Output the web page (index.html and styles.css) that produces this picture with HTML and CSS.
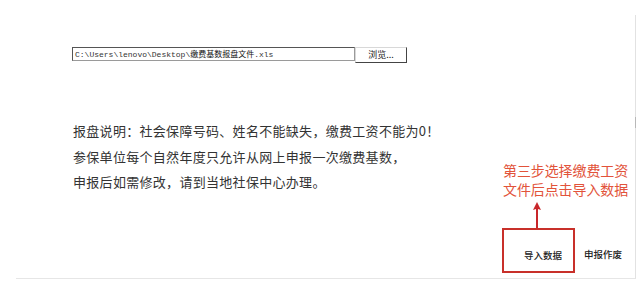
FILE: index.html
```html
<!DOCTYPE html>
<html lang="zh-CN">
<head>
    <meta charset="UTF-8">
    <meta name="viewport" content="width=device-width, initial-scale=1.0">
    <title>缴费基数报盘</title>
    <link rel="stylesheet" href="styles.css">
</head>
<body>
    <div class="panel">
        <div class="file-row">
            <div class="file-path">C:\Users\lenovo\Desktop\<span class="cjk">缴费基数报盘文件</span>.xls</div>
            <div class="browse">浏览...</div>
        </div>

        <div class="notice">
            <p>报盘说明：社会保障号码、姓名不能缺失，缴费工资不能为0！</p>
            <p>参保单位每个自然年度只允许从网上申报一次缴费基数，</p>
            <p>申报后如需修改，请到当地社保中心办理。</p>
        </div>

        <div class="callout">
            <div class="callout-text">第三步选择缴费工资<br>文件后点击导入数据</div>
            <svg class="arrow" width="10" height="26" viewBox="0 0 10 26">
                <path d="M5 0 L9 8 L6 7 L6 26 L4 26 L4 7 L1 8 Z" fill="#c8262a"/>
            </svg>
        </div>

        <div class="actions">
            <div class="btn btn-import">导入数据</div>
            <div class="btn">申报作废</div>
        </div>
    </div>
</body>
</html>
```

FILE: styles.css
```css
body {
    margin: 0;
    background: #fff;
    font-family: "Noto Sans CJK SC", "Noto Sans", sans-serif;
}
.panel {
    position: relative;
    margin: 15px 4px 0 16px;
    height: 263px;
    border-right: 1px solid #e2e2e2;
    border-bottom: 1px solid #e6e6e6;
    display: flex;
    flex-direction: column;
}
.panel::after {
    content: "";
    position: absolute;
    right: -1px;
    top: 102px;
    width: 1px;
    height: 11px;
    background: #b8b8b8;
}
.file-row {
    display: flex;
    align-items: flex-start;
    padding: 32px 0 0 56px;
}
.file-path {
    box-sizing: border-box;
    width: 283px;
    height: 14px;
    border: 1px solid #9a9a9a;
    border-top-color: #555;
    border-left-color: #555;
    font-family: "Liberation Mono", monospace;
    font-size: 8px;
    line-height: 12px;
    padding-left: 2px;
    color: #333;
    white-space: nowrap;
    overflow: hidden;
}
.file-path .cjk {
    font-family: "Noto Sans CJK SC", sans-serif;
    font-size: 8px;
    color: #111;
}
.browse {
    box-sizing: border-box;
    width: 52px;
    height: 16px;
    border: 1px solid #d8d8d8;
    border-right-color: #444;
    border-bottom-color: #444;
    font-size: 9px;
    line-height: 14px;
    text-align: center;
    color: #222;
}
.notice {
    margin: 55px 0 0 57px;
    color: #333;
    font-size: 13px;
    letter-spacing: 0.3px;
}
.notice p {
    margin: 0;
    line-height: 25.5px;
}
.callout {
    position: absolute;
    left: 487px;
    top: 146px;
    display: flex;
    flex-direction: column;
}
.callout-text {
    color: #e2533a;
    font-size: 14px;
    line-height: 19px;
    letter-spacing: -0.1px;
}
.arrow {
    margin: 3px 0 0 29px;
}
.actions {
    margin-top: auto;
    display: flex;
    justify-content: flex-end;
    align-items: flex-end;
    padding: 0 13px 5px 0;
    gap: 9px;
}
.btn {
    font-size: 9.5px;
    font-weight: 500;
    color: #222;
    line-height: 14px;
    padding-bottom: 12px;
}
.btn-import {
    box-sizing: border-box;
    width: 73px;
    height: 45px;
    border: 2px solid #c8302a;
    padding: 18px 0 0 20px;
}
```
